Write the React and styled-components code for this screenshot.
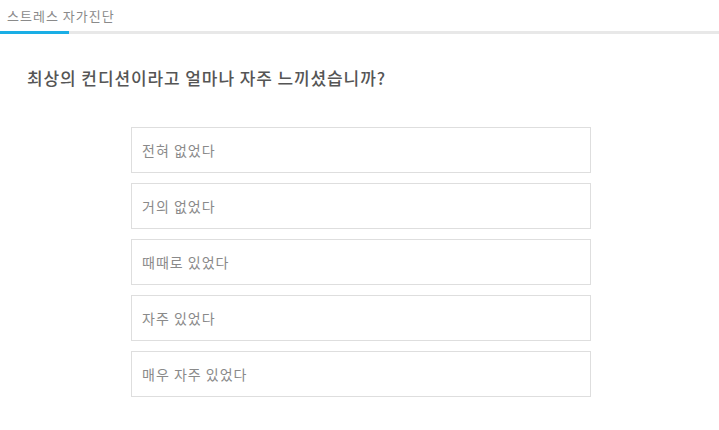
import React from "react";
import styled, { createGlobalStyle } from "styled-components";

const Global = createGlobalStyle`
  html, body { margin: 0; padding: 0; background: #fff; }
  body { font-family: "Noto Sans CJK KR", "Noto Sans", sans-serif; }
`;

const Page = styled.div`
  width: 719px;
  min-height: 430px;
  background: #fff;
`;

const Header = styled.div`
  height: 31px;
  display: flex;
  align-items: center;
  padding-left: 7px;
  font-size: 13px;
  letter-spacing: 1px;
  color: #8a8a8a;
  line-height: 1;
`;

const Progress = styled.div`
  height: 3px;
  background: #e8e8e8;
`;

const ProgressFill = styled.div`
  height: 100%;
  background: #1aaee5;
`;

const Question = styled.h2`
  margin: 0;
  padding: 32px 0 0 27px;
  font-size: 17px;
  letter-spacing: 0.9px;
  font-weight: 500;
  color: #555;
  line-height: 24px;
`;

const Options = styled.div`
  display: flex;
  flex-direction: column;
  gap: 10px;
  width: 460px;
  margin: 37px 0 0 131px;
`;

const Option = styled.div`
  box-sizing: border-box;
  height: 46px;
  border: 1px solid #dedede;
  display: flex;
  align-items: center;
  padding-left: 10px;
  font-size: 14px;
  letter-spacing: 1px;
  color: #8a8a8a;
  background: #fff;
`;

const options = ["전혀 없었다", "거의 없었다", "때때로 있었다", "자주 있었다", "매우 자주 있었다"];

export default function App() {
  return (
    <Page>
      <Global />
      <Header>스트레스 자가진단</Header>
      <Progress>
        <ProgressFill style={{ width: "69px" }} />
      </Progress>
      <Question>최상의 컨디션이라고 얼마나 자주 느끼셨습니까?</Question>
      <Options>
        {options.map((o) => (
          <Option key={o}>{o}</Option>
        ))}
      </Options>
    </Page>
  );
}
